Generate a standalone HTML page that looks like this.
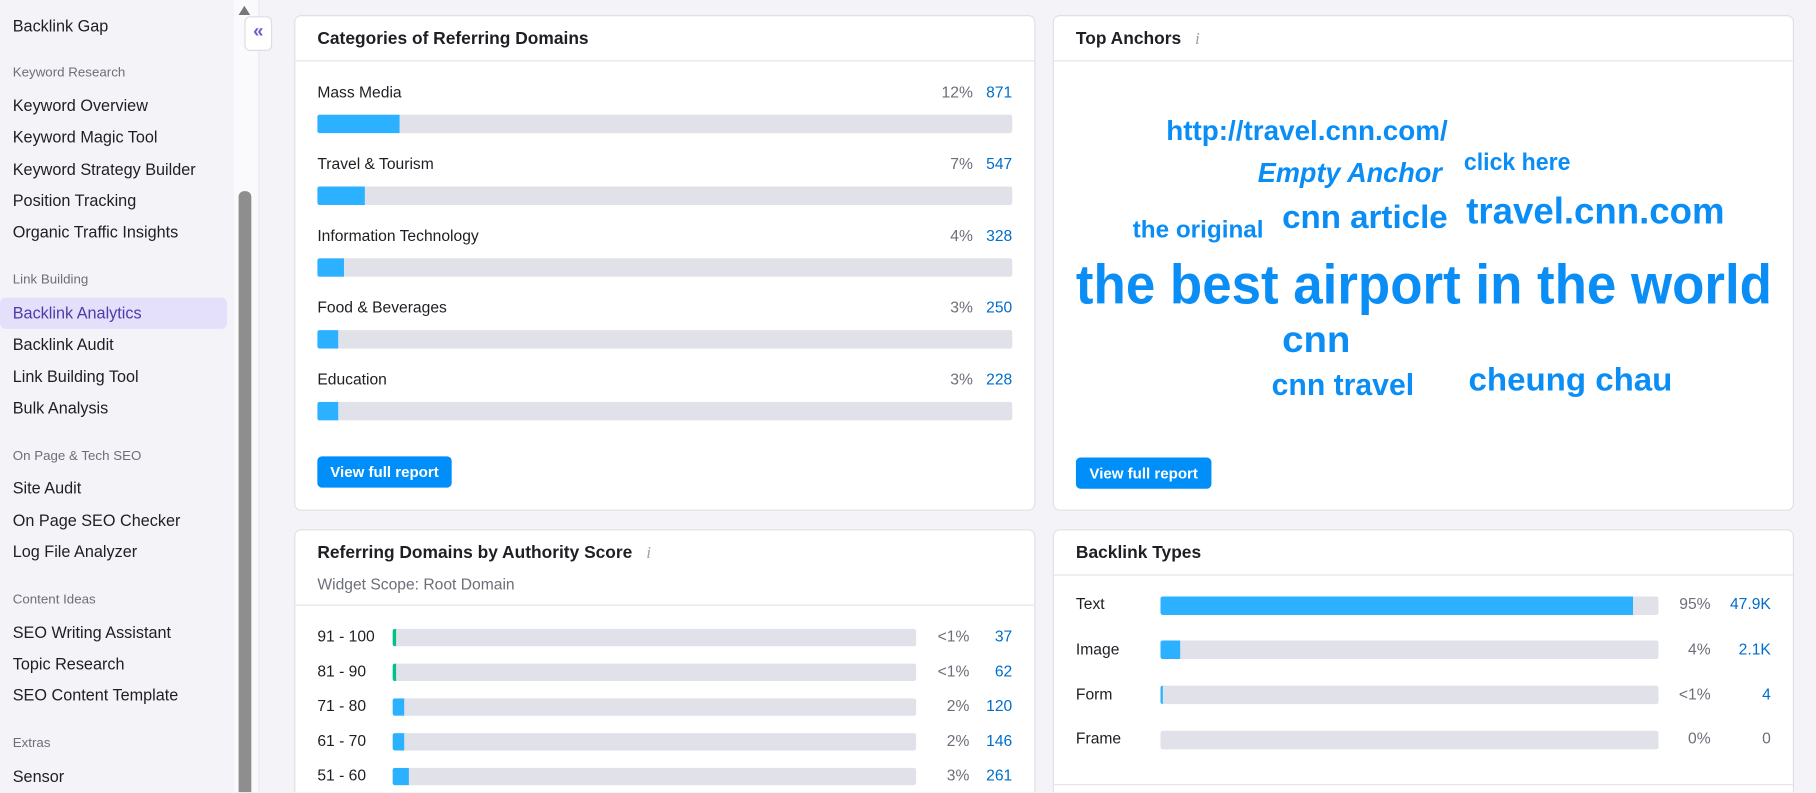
<!DOCTYPE html>
<html><head><meta charset="utf-8"><style>
*{box-sizing:border-box;margin:0;padding:0}
html,body{width:1816px;height:793px;overflow:hidden;background:#f4f4f8}
#w{position:absolute;left:0;top:0;width:1568px;height:684px;overflow:hidden;transform:scale(1.15816);transform-origin:0 0;font-family:"Liberation Sans",sans-serif;color:#1e1e24}
.a{position:absolute}
.side{left:0;top:0;width:202px;height:684px;background:#f4f4f8}
.it{position:absolute;left:11px;font-size:14px;color:#1e1e24;line-height:18px}
.sec{position:absolute;left:11px;font-size:11.5px;color:#6c6e79;line-height:14px}
.card{position:absolute;background:#fff;border:1px solid #dfe0e6;border-radius:6px}
.ttl{position:absolute;left:19px;top:11px;font-size:15px;font-weight:bold;color:#1e1e24}
.hl{position:absolute;left:0;right:0;height:1px;background:#e3e4ea}
.lbl{position:absolute;font-size:13.5px;color:#1e1e24}
.bar{position:absolute;background:#e0e1e9;border-radius:2px;overflow:hidden}
.bar i{position:absolute;left:0;top:0;bottom:0;background:#2bb1ff}
.pc{position:absolute;font-size:13.5px;color:#6c6e79;text-align:right}
.nm{position:absolute;font-size:13.5px;color:#006dca;text-align:right}
.btn{position:absolute;background:#008ff8;color:#fff;font-weight:bold;font-size:13px;border-radius:4px;text-align:center;line-height:27px}
.info{font-family:"Liberation Serif",serif;font-style:italic;color:#a0a2ab;font-weight:normal;font-size:15px;margin-left:12px}
</style></head><body><div id="w">
<div class="a side">
<div class="it" style="top:13px">Backlink Gap</div>
<div class="sec" style="top:56px">Keyword Research</div>
<div class="it" style="top:82px">Keyword Overview</div>
<div class="it" style="top:109px">Keyword Magic Tool</div>
<div class="it" style="top:137px">Keyword Strategy Builder</div>
<div class="it" style="top:164px">Position Tracking</div>
<div class="it" style="top:191px">Organic Traffic Insights</div>
<div class="sec" style="top:235px">Link Building</div>
<div class="a" style="left:0;top:257px;width:196px;height:27px;background:#e4e0fc;border-radius:5px"></div>
<div class="it" style="top:261px;color:#4b3ca8">Backlink Analytics</div>
<div class="it" style="top:288px">Backlink Audit</div>
<div class="it" style="top:316px">Link Building Tool</div>
<div class="it" style="top:343px">Bulk Analysis</div>
<div class="sec" style="top:387px">On Page &amp; Tech SEO</div>
<div class="it" style="top:412px">Site Audit</div>
<div class="it" style="top:440px">On Page SEO Checker</div>
<div class="it" style="top:467px">Log File Analyzer</div>
<div class="sec" style="top:511px">Content Ideas</div>
<div class="it" style="top:537px">SEO Writing Assistant</div>
<div class="it" style="top:564px">Topic Research</div>
<div class="it" style="top:591px">SEO Content Template</div>
<div class="sec" style="top:635px">Extras</div>
<div class="it" style="top:661px">Sensor</div>
</div>
<div class="a" style="left:202px;top:0;width:22px;height:684px;background:#fafafc;border-right:1px solid #e8e8ee"></div>
<div class="a" style="left:206px;top:165px;width:11px;height:530px;background:#8e8e8e;border-radius:5px"></div>
<div class="a" style="left:206px;top:5px;width:0;height:0;border-left:5px solid transparent;border-right:5px solid transparent;border-bottom:8px solid #777"></div>
<div class="a" style="left:211px;top:14px;width:24px;height:30px;background:#fff;border:1px solid #dcdde4;border-radius:5px;color:#6a5bd0;font-size:16px;text-align:center;line-height:26px;font-weight:bold">«</div>

<div class="card" style="left:254px;top:13px;width:640px;height:428px">
<div class="ttl">Categories of Referring Domains</div>
<div class="hl" style="top:38px"></div>
</div>
<div class="lbl" style="left:274px;top:72px">Mass Media</div><div class="pc" style="left:790px;width:50px;top:72px">12%</div><div class="nm" style="left:840px;width:34px;top:72px">871</div>
<div class="bar" style="left:274px;top:99px;width:600px;height:16px"><i style="width:71px"></i></div>
<div class="lbl" style="left:274px;top:134px">Travel &amp; Tourism</div><div class="pc" style="left:790px;width:50px;top:134px">7%</div><div class="nm" style="left:840px;width:34px;top:134px">547</div>
<div class="bar" style="left:274px;top:161px;width:600px;height:16px"><i style="width:41px"></i></div>
<div class="lbl" style="left:274px;top:196px">Information Technology</div><div class="pc" style="left:790px;width:50px;top:196px">4%</div><div class="nm" style="left:840px;width:34px;top:196px">328</div>
<div class="bar" style="left:274px;top:223px;width:600px;height:16px"><i style="width:23px"></i></div>
<div class="lbl" style="left:274px;top:258px">Food &amp; Beverages</div><div class="pc" style="left:790px;width:50px;top:258px">3%</div><div class="nm" style="left:840px;width:34px;top:258px">250</div>
<div class="bar" style="left:274px;top:285px;width:600px;height:16px"><i style="width:18px"></i></div>
<div class="lbl" style="left:274px;top:320px">Education</div><div class="pc" style="left:790px;width:50px;top:320px">3%</div><div class="nm" style="left:840px;width:34px;top:320px">228</div>
<div class="bar" style="left:274px;top:347px;width:600px;height:16px"><i style="width:18px"></i></div>
<div class="btn" style="left:274px;top:394px;width:116px;height:27px">View full report</div>

<div class="card" style="left:909px;top:13px;width:640px;height:428px">
<div class="ttl">Top Anchors<span class="info">i</span></div>
<div class="hl" style="top:38px"></div>
</div>
<svg class="a" style="left:909px;top:60px" width="640" height="320" font-family="Liberation Sans, sans-serif" font-weight="bold" fill="#0a8ef5">
<text x="98" y="61" font-size="24" textLength="243" lengthAdjust="spacingAndGlyphs">http://travel.cnn.com/</text>
<text x="177" y="97" font-size="24" font-style="italic" textLength="159" lengthAdjust="spacingAndGlyphs">Empty Anchor</text>
<text x="355" y="87" font-size="21" textLength="92" lengthAdjust="spacingAndGlyphs">click here</text>
<text x="69" y="145" font-size="21" textLength="113" lengthAdjust="spacingAndGlyphs">the original</text>
<text x="198" y="137" font-size="28" textLength="143" lengthAdjust="spacingAndGlyphs">cnn article</text>
<text x="357" y="133" font-size="32" textLength="223" lengthAdjust="spacingAndGlyphs">travel.cnn.com</text>
<text x="20" y="202" font-size="48" textLength="601" lengthAdjust="spacingAndGlyphs">the best airport in the world</text>
<text x="198" y="244" font-size="32" textLength="59" lengthAdjust="spacingAndGlyphs">cnn</text>
<text x="189" y="281" font-size="26" textLength="123" lengthAdjust="spacingAndGlyphs">cnn travel</text>
<text x="359" y="277" font-size="28" textLength="176" lengthAdjust="spacingAndGlyphs">cheung chau</text>
</svg>
<div class="btn" style="left:929px;top:395px;width:117px;height:27px">View full report</div>

<div class="card" style="left:254px;top:457px;width:640px;height:300px">
<div class="ttl">Referring Domains by Authority Score<span class="info">i</span></div>
<div class="a" style="left:19px;top:39px;font-size:13.5px;color:#6c6e79">Widget Scope: Root Domain</div>
<div class="hl" style="top:64px"></div>
</div>
<div class="lbl" style="left:274px;top:542px">91 - 100</div><div class="bar" style="left:339px;top:543px;width:452px;height:15px"><i style="width:3px;background:#00c284"></i></div><div class="pc" style="left:790px;width:47px;top:542px">&lt;1%</div><div class="nm" style="left:840px;width:34px;top:542px">37</div>
<div class="lbl" style="left:274px;top:572px">81 - 90</div><div class="bar" style="left:339px;top:573px;width:452px;height:15px"><i style="width:3px;background:#00c284"></i></div><div class="pc" style="left:790px;width:47px;top:572px">&lt;1%</div><div class="nm" style="left:840px;width:34px;top:572px">62</div>
<div class="lbl" style="left:274px;top:602px">71 - 80</div><div class="bar" style="left:339px;top:603px;width:452px;height:15px"><i style="width:10px"></i></div><div class="pc" style="left:790px;width:47px;top:602px">2%</div><div class="nm" style="left:840px;width:34px;top:602px">120</div>
<div class="lbl" style="left:274px;top:632px">61 - 70</div><div class="bar" style="left:339px;top:633px;width:452px;height:15px"><i style="width:10px"></i></div><div class="pc" style="left:790px;width:47px;top:632px">2%</div><div class="nm" style="left:840px;width:34px;top:632px">146</div>
<div class="lbl" style="left:274px;top:662px">51 - 60</div><div class="bar" style="left:339px;top:663px;width:452px;height:15px"><i style="width:14px"></i></div><div class="pc" style="left:790px;width:47px;top:662px">3%</div><div class="nm" style="left:840px;width:34px;top:662px">261</div>

<div class="card" style="left:909px;top:457px;width:640px;height:300px">
<div class="ttl">Backlink Types</div>
<div class="hl" style="top:38px"></div>
<div class="hl" style="top:219px"></div>
</div>
<div class="lbl" style="left:929px;top:514px">Text</div><div class="bar" style="left:1002px;top:515px;width:430px;height:16px"><i style="width:408px"></i></div><div class="pc" style="left:1420px;width:57px;top:514px">95%</div><div class="nm" style="left:1480px;width:49px;top:514px">47.9K</div>
<div class="lbl" style="left:929px;top:553px">Image</div><div class="bar" style="left:1002px;top:553px;width:430px;height:16px"><i style="width:17px"></i></div><div class="pc" style="left:1420px;width:57px;top:553px">4%</div><div class="nm" style="left:1480px;width:49px;top:553px">2.1K</div>
<div class="lbl" style="left:929px;top:592px">Form</div><div class="bar" style="left:1002px;top:592px;width:430px;height:16px"><i style="width:2px"></i></div><div class="pc" style="left:1420px;width:57px;top:592px">&lt;1%</div><div class="nm" style="left:1480px;width:49px;top:592px">4</div>
<div class="lbl" style="left:929px;top:630px">Frame</div><div class="bar" style="left:1002px;top:631px;width:430px;height:16px"></div><div class="pc" style="left:1420px;width:57px;top:630px">0%</div><div class="nm" style="left:1480px;width:49px;top:630px;color:#6c6e79">0</div>
</div></body></html>
